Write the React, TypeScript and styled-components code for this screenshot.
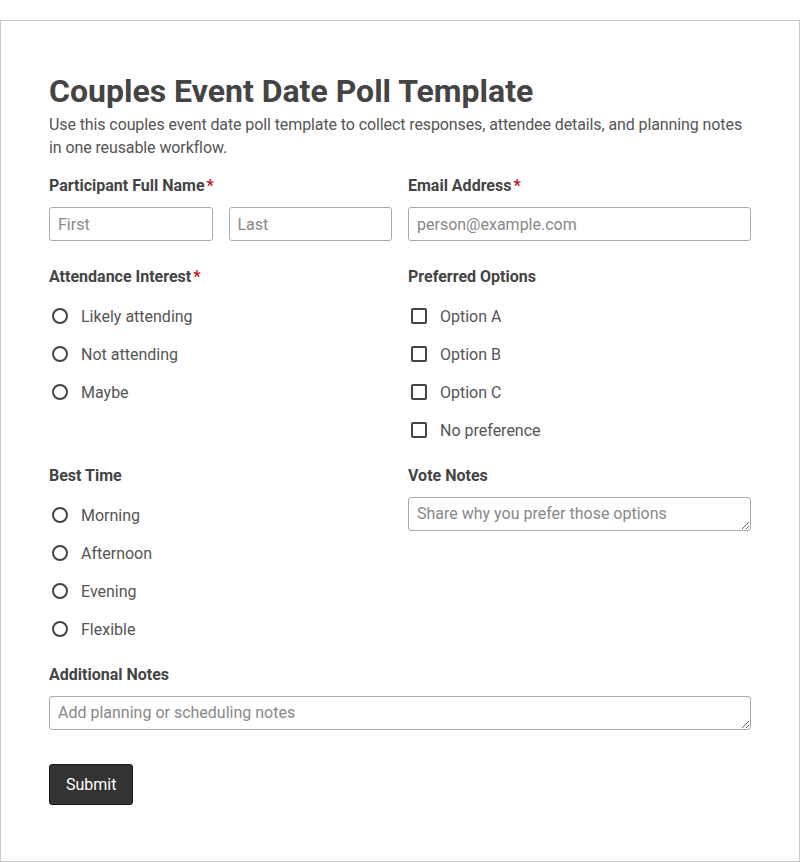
import styled, { createGlobalStyle } from "styled-components";

const GlobalStyle = createGlobalStyle`
  html, body {
    margin: 0;
    padding: 0;
    background: #ffffff;
  }
  body {
    font-family: Roboto, "Liberation Sans", Arial, sans-serif;
    color: #444;
  }
  * {
    box-sizing: border-box;
  }
`;

const attendance = ["Likely attending", "Not attending", "Maybe"];
const preferred = ["Option A", "Option B", "Option C", "No preference"];
const bestTime = ["Morning", "Afternoon", "Evening", "Flexible"];

const App = () => {
  return (
    <>
      <GlobalStyle />
      <Card>
        <Title>Couples Event Date Poll Template</Title>
        <Intro>
          Use this couples event date poll template to collect responses,
          attendee details, and planning notes in one reusable workflow.
        </Intro>
        <Grid>
          <Field $spaced>
            <Label>
              Participant Full Name<Star>*</Star>
            </Label>
            <NameRow>
              <Input placeholder="First" />
              <Input placeholder="Last" />
            </NameRow>
          </Field>
          <Field $spaced>
            <Label>
              Email Address<Star>*</Star>
            </Label>
            <Input placeholder="person@example.com" />
          </Field>

          <Field>
            <Label>
              Attendance Interest<Star>*</Star>
            </Label>
            <Options>
              {attendance.map((o) => (
                <Option key={o}>
                  <Radio />
                  {o}
                </Option>
              ))}
            </Options>
          </Field>
          <Field>
            <Label>Preferred Options</Label>
            <Options>
              {preferred.map((o) => (
                <Option key={o}>
                  <Check />
                  {o}
                </Option>
              ))}
            </Options>
          </Field>

          <Field>
            <Label>Best Time</Label>
            <Options>
              {bestTime.map((o) => (
                <Option key={o}>
                  <Radio />
                  {o}
                </Option>
              ))}
            </Options>
          </Field>
          <Field>
            <Label>Vote Notes</Label>
            <TextArea rows={1} placeholder="Share why you prefer those options" />
          </Field>

          <Field $wide>
            <Label>Additional Notes</Label>
            <TextArea rows={1} placeholder="Add planning or scheduling notes" />
          </Field>
        </Grid>
        <SubmitButton type="button">Submit</SubmitButton>
      </Card>
    </>
  );
};

export default App;

const Card = styled.form`
  margin-top: 20px;
  width: 800px;
  height: 842px;
  border: 1px solid #c8c8c8;
  padding: 51px 48px 0;
  background: #fff;
`;
const Title = styled.h1`
  margin: 0;
  font-size: 32px;
  line-height: 38px;
  font-weight: 700;
  color: #444;
`;
const Intro = styled.p`
  margin: 3px 0 0;
  font-size: 16px;
  line-height: 23px;
  letter-spacing: -0.1px;
  color: #555;
`;
const Grid = styled.div`
  margin-top: 17px;
  display: grid;
  grid-template-columns: 1fr 1fr;
  column-gap: 16px;
  row-gap: 25px;
`;
const Field = styled.div<{ $wide?: boolean; $spaced?: boolean }>`
  display: flex;
  flex-direction: column;
  grid-column: ${(p) => (p.$wide ? "1 / -1" : "auto")};
  padding-bottom: ${(p) => (p.$spaced ? "1px" : "0")};
`;
const Label = styled.label`
  font-size: 16px;
  line-height: 20px;
  font-weight: 700;
  color: #444;
  margin-bottom: 11px;
`;
const Star = styled.span`
  color: #c0101a;
  margin-left: 2px;
`;
const NameRow = styled.div`
  display: grid;
  grid-template-columns: 1fr 1fr;
  gap: 16px;
`;
const Input = styled.input`
  width: 100%;
  height: 34px;
  padding: 6px 8px;
  border: 1px solid #aaa;
  border-radius: 3px;
  font-family: Roboto, "Liberation Sans", Arial, sans-serif;
  font-size: 16px;
  color: #444;
  &::placeholder {
    color: #888;
  }
`;
const TextArea = styled.textarea`
  width: 100%;
  height: 34px;
  min-height: 34px;
  padding: 6px 8px;
  border: 1px solid #aaa;
  border-radius: 3px;
  font-family: Roboto, "Liberation Sans", Arial, sans-serif;
  font-size: 16px;
  line-height: 20px;
  color: #444;
  display: block;
  &::placeholder {
    color: #888;
  }
`;
const Options = styled.div`
  display: flex;
  flex-direction: column;
  gap: 16px;
  padding-top: 7px;
`;
const Option = styled.label`
  display: flex;
  align-items: center;
  gap: 13px;
  height: 22px;
  padding-left: 3px;
  font-size: 16px;
  color: #555;
`;
const Radio = styled.span`
  width: 16px;
  height: 16px;
  border: 2px solid #444;
  border-radius: 50%;
  flex-shrink: 0;
`;
const Check = styled.span`
  width: 16px;
  height: 16px;
  border: 2px solid #444;
  border-radius: 2px;
  flex-shrink: 0;
`;
const SubmitButton = styled.button`
  margin-top: 34px;
  padding: 9px 16px;
  background: #333;
  color: #fff;
  border: 1px solid #1a1a1a;
  border-radius: 3px;
  font-family: Roboto, "Liberation Sans", Arial, sans-serif;
  font-size: 16px;
  line-height: 21px;
`;
